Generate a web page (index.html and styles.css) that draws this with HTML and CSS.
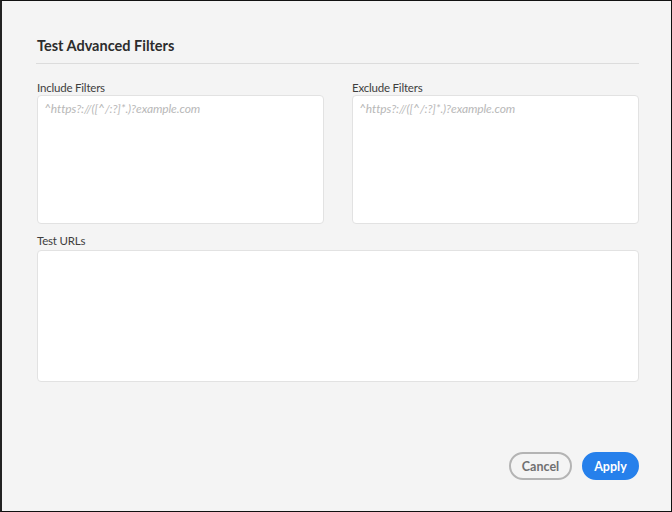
FILE: index.html
```html
<!DOCTYPE html>
<html>
<head>
<meta charset="utf-8">
<link rel="stylesheet" href="styles.css">
</head>
<body>
<div class="frame">
  <div class="dialog">
    <div class="header">
      <h1 class="title">Test Advanced Filters</h1>
    </div>
    <div class="grid">
      <div class="field">
        <label class="label">Include Filters</label>
        <div class="box box-short"><span class="ph">^https?://([^/:?]*.)?example.com</span></div>
      </div>
      <div class="field">
        <label class="label">Exclude Filters</label>
        <div class="box box-short"><span class="ph">^https?://([^/:?]*.)?example.com</span></div>
      </div>
      <div class="field wide">
        <label class="label label-wide">Test URLs</label>
        <div class="box box-tall"></div>
      </div>
    </div>
    <div class="footer">
      <button class="btn btn-cancel">Cancel</button>
      <button class="btn btn-apply">Apply</button>
    </div>
  </div>
</div>
</body>
</html>
```
FILE: styles.css
```css
* { box-sizing: border-box; }
html, body { margin: 0; padding: 0; }
body { font-family: Lato, "Open Sans", sans-serif; background: #f4f4f4; }
.frame {
  width: 672px;
  height: 512px;
  border-top: 1px solid #111;
  border-left: 2px solid #222;
  border-right: 1px solid #111;
  border-bottom: 1px solid #111;
  background: #f4f4f4;
}
.dialog {
  height: 100%;
  padding: 0 32px 0 35px;
  display: flex;
  flex-direction: column;
}
.header {
  padding-top: 36px;
  padding-bottom: 9px;
  border-bottom: 1px solid #dcdcdc;
  margin-left: -1px;
}
.title {
  margin: 0 0 0 1px;
  font-size: 14.5px;
  line-height: 17px;
  font-weight: 700;
  color: #2c2c2c;
  letter-spacing: 0;
}
.grid {
  display: grid;
  grid-template-columns: 287px 287px;
  column-gap: 28px;
  row-gap: 10px;
  margin-top: 17px;
}
.wide { grid-column: 1 / 3; }
.field { display: flex; flex-direction: column; }
.label {
  font-size: 11.5px;
  line-height: 14px;
  color: #3e3e3e;
  margin-bottom: 0;
  letter-spacing: -0.2px;
}
.label-wide { margin-bottom: 2px; }
.box {
  background: #fff;
  border: 1px solid #e2e2e2;
  border-radius: 4px;
  padding: 0 6px;
  line-height: 22px;
}
.box-short { height: 129px; }
.box-tall { height: 132px; }
.ph {
  font-style: italic;
  font-size: 12px;
  color: #b8b8b8;
  letter-spacing: -0.1px;
}
.footer {
  margin-top: auto;
  padding-bottom: 31px;
  display: flex;
  justify-content: flex-end;
  gap: 10px;
}
.btn {
  height: 28px;
  border-radius: 14px;
  font-family: Lato, "Open Sans", sans-serif;
  font-weight: 700;
  font-size: 12.5px;
  padding: 0;
  cursor: pointer;
}
.btn-cancel {
  width: 63px;
  background: transparent;
  border: 2px solid #b4b4b4;
  color: #707070;
}
.btn-apply {
  width: 57px;
  background: #2680eb;
  border: 2px solid #2680eb;
  color: #fff;
}
```
